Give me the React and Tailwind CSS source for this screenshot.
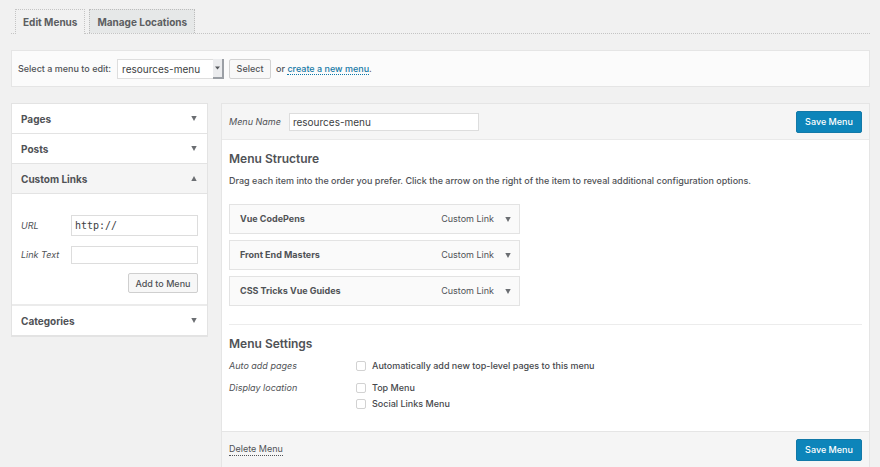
import React from "react";

const pages = ["Pages", "Posts"];
const items = ["Vue CodePens", "Front End Masters", "CSS Tricks Vue Guides"];

function Arrow({ up = false }) {
  return (
    <svg width="6" height="5" viewBox="0 0 6 5" className="shrink-0 fill-[#6b6e72]" aria-hidden="true">
      <path d={up ? "M0.3 5 L3 0 L5.7 5 Z" : "M0.3 0 H5.7 L3 5 Z"} />
    </svg>
  );
}

function SectionHeader({ title, open = false }) {
  return (
    <h3>
      <button
        type="button"
        aria-expanded={open}
        className={
          open
            ? "flex h-[30px] w-full items-center justify-between border-b border-[#e3e3e3] bg-[#f5f5f5] pr-[10px] pl-[9px] text-[10px] font-bold"
            : "flex h-[30px] w-full items-center justify-between border-b border-[#e3e3e3] bg-white pr-[10px] pl-[9px] text-[10px] font-bold"
        }
      >
        {title}
        <Arrow up={open} />
      </button>
    </h3>
  );
}

function SaveButton() {
  return (
    <button
      type="button"
      className="h-[22px] w-[66px] rounded-[2px] border border-[#1279a8] bg-[#0d85ba] text-[9px] leading-none text-white"
    >
      Save Menu
    </button>
  );
}

function Check({ label }) {
  return (
    <label className="flex h-4 items-center gap-[6px] text-[#46484c]">
      <input
        type="checkbox"
        className="size-[10px] appearance-none rounded-[2px] border border-[#d2d2d2] bg-white checked:bg-[#0d85ba]"
      />
      {label}
    </label>
  );
}

export default function App() {
  return (
    <div className="min-h-screen bg-[#f1f1f1] pr-[10px] pl-[11px] font-['Inter','Liberation_Sans',sans-serif] text-[9px] leading-4 font-medium text-[#505256]">
      <nav className="flex gap-1 border-b border-dotted border-[#c4c4c4] pt-[9px] pl-1 text-[10px] font-bold text-[#5c5e61]">
        <a href="#edit" className="-mb-px h-[25px] border border-b-0 border-dotted border-[#c4c4c4] bg-[#f1f1f1] px-[7px] leading-6">
          Edit Menus
        </a>
        <a href="#locations" className="h-6 border border-b-0 border-dotted border-[#bcbcbc] bg-[#e6e8e8] px-[7px] leading-6">
          Manage Locations
        </a>
      </nav>

      <form className="mt-4 flex h-[37px] items-center border border-[#e5e5e5] bg-[#fbfbfb] px-[6px]">
        <label htmlFor="menu-select">Select a menu to edit:</label>
        <div className="relative ml-[6px] h-5 w-[107px]">
          <select
            id="menu-select"
            className="h-full w-full appearance-none border border-[#dedede] bg-white pl-1 text-[10px] leading-none font-normal text-[#3c3e42]"
          >
            <option>resources-menu</option>
          </select>
          <span className="pointer-events-none absolute inset-y-0 right-0 flex w-[11px] items-center justify-center border-r-2 border-b-2 border-[#9b9fa5] bg-[#ebecee]">
            <svg width="5" height="4" viewBox="0 0 5 4" className="fill-[#55585c]" aria-hidden="true">
              <path d="M0 0.5 H5 L2.5 3.5 Z" />
            </svg>
          </span>
        </div>
        <button type="button" className="ml-[5px] h-5 w-[42px] rounded-[2px] border border-[#d2d2d2] bg-[#f8f8f8] leading-none">
          Select
        </button>
        <span className="ml-[5px]">
          or{" "}
          <a href="#new" className="border-b border-dotted border-[#0d78a8] text-[#1679a6]">
            create a new menu
          </a>
          .
        </span>
      </form>

      <div className="mt-4 flex items-start gap-[13px]">
        <aside className="w-[197px] shrink-0 border border-[#e3e3e3] bg-white">
          {pages.map((p) => (
            <SectionHeader key={p} title={p} />
          ))}
          <SectionHeader title="Custom Links" open />
          <form className="border-b-2 border-[#ebebeb] px-[9px] pt-[21px] pb-[11px]">
            <div className="flex items-center justify-between">
              <label htmlFor="url" className="font-normal italic">URL</label>
              <input
                id="url"
                defaultValue="http://"
                className="h-[21px] w-[127px] border border-[#dddddd] bg-white px-[3px] font-['DejaVu_Sans_Mono','Liberation_Mono',monospace] text-[10px] font-normal text-[#3c3e42]"
              />
            </div>
            <div className="mt-[10px] flex items-center justify-between">
              <label htmlFor="link-text" className="font-normal italic">Link Text</label>
              <input id="link-text" className="h-[18px] w-[127px] border border-[#dddddd] bg-white px-1 text-[10px] font-normal" />
            </div>
            <div className="mt-[9px] flex justify-end">
              <button type="button" className="h-5 w-[70px] rounded-[2px] border border-[#cfcfcf] bg-[#f7f7f7] leading-none">
                Add to Menu
              </button>
            </div>
          </form>
          <SectionHeader title="Categories" />
        </aside>

        <main className="min-w-0 flex-1 border border-b-0 border-[#e5e5e5] bg-white">
          <header className="flex h-9 items-center border-b border-[#e9e9e9] bg-[#f5f5f5] px-[7px]">
            <label htmlFor="menu-name" className="font-normal italic">Menu Name</label>
            <input
              id="menu-name"
              defaultValue="resources-menu"
              className="ml-2 h-[18px] w-[190px] border border-[#dddddd] bg-white px-[3px] text-[10px] font-normal text-[#3c3e42]"
            />
            <div className="ml-auto">
              <SaveButton />
            </div>
          </header>

          <section className="px-[7px] pt-[9px]">
            <h2 className="text-[12px] leading-5 font-semibold">Menu Structure</h2>
            <p className="mt-1">
              Drag each item into the order you prefer. Click the arrow on the right of the item to reveal additional
              configuration options.
            </p>
            <ul className="mt-[15px] flex w-[291px] flex-col gap-[6px]">
              {items.map((i) => (
                <li key={i} className="flex h-[30px] items-center border border-[#e3e3e3] bg-[#fafafa] pr-2 pl-[10px]">
                  <span className="font-bold">{i}</span>
                  <span className="ml-auto font-normal">Custom Link</span>
                  <button type="button" aria-label={"Edit " + i} className="ml-[11px]">
                    <Arrow />
                  </button>
                </li>
              ))}
            </ul>
          </section>

          <section className="mx-[7px] mt-[18px] border-t border-[#ececec] pt-[9px] pb-[19px]">
            <h2 className="text-[12px] leading-5 font-semibold">Menu Settings</h2>
            <div className="mt-1 flex">
              <span className="w-[127px] font-normal italic">Auto add pages</span>
              <Check label="Automatically add new top-level pages to this menu" />
            </div>
            <div className="mt-[6px] flex">
              <span className="w-[127px] font-normal italic">Display location</span>
              <div>
                <Check label="Top Menu" />
                <Check label="Social Links Menu" />
              </div>
            </div>
          </section>

          <footer className="flex h-9 items-center justify-between border-t border-[#e5e5e5] bg-[#f5f5f5] px-[7px]">
            <a href="#delete" className="border-b border-dotted border-[#505256] leading-3 font-normal">
              Delete Menu
            </a>
            <SaveButton />
          </footer>
        </main>
      </div>
    </div>
  );
}
